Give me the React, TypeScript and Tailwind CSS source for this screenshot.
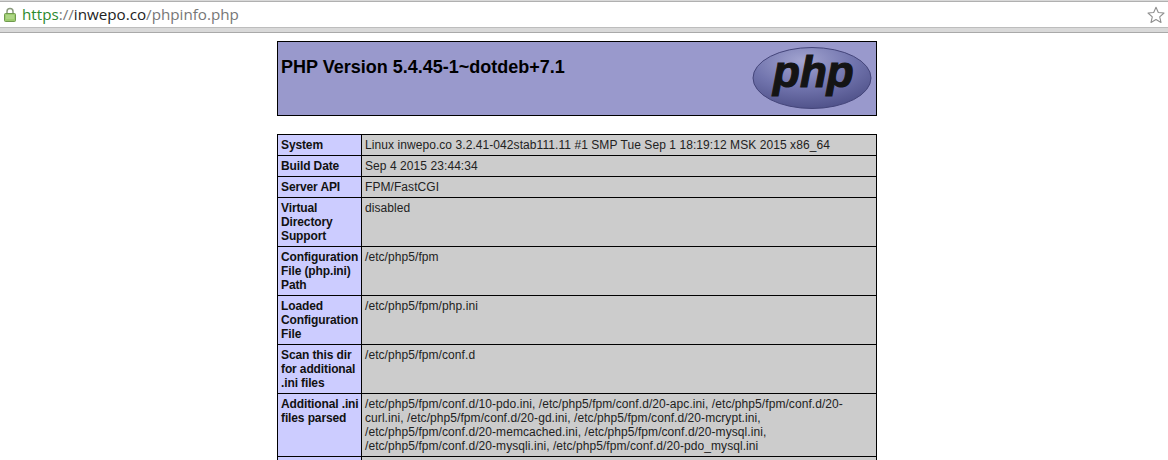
const rows: { label: string; value: string }[] = [
  {
    label: "System",
    value: "Linux inwepo.co 3.2.41-042stab111.11 #1 SMP Tue Sep 1 18:19:12 MSK 2015 x86_64",
  },
  { label: "Build Date", value: "Sep 4 2015 23:44:34" },
  { label: "Server API", value: "FPM/FastCGI" },
  { label: "Virtual Directory Support", value: "disabled" },
  { label: "Configuration File (php.ini) Path", value: "/etc/php5/fpm" },
  { label: "Loaded Configuration File", value: "/etc/php5/fpm/php.ini" },
  { label: "Scan this dir for additional .ini files", value: "/etc/php5/fpm/conf.d" },
  {
    label: "Additional .ini files parsed",
    value:
      "/etc/php5/fpm/conf.d/10-pdo.ini, /etc/php5/fpm/conf.d/20-apc.ini, /etc/php5/fpm/conf.d/20-curl.ini, /etc/php5/fpm/conf.d/20-gd.ini, /etc/php5/fpm/conf.d/20-mcrypt.ini, /etc/php5/fpm/conf.d/20-memcached.ini, /etc/php5/fpm/conf.d/20-mysql.ini, /etc/php5/fpm/conf.d/20-mysqli.ini, /etc/php5/fpm/conf.d/20-pdo_mysql.ini",
  },
  // next row only shows its top border before the window ends
  { label: "\u00a0", value: "\u00a0" },
];

const LockIcon = () => (
  <svg width="12" height="15" viewBox="0 0 12 15" className="shrink-0">
    <path d="M3 7V4.5a3 3 0 0 1 6 0V7" fill="none" stroke="#8a9a7c" strokeWidth="1.5" />
    <rect x="0.5" y="6.5" width="11" height="8" rx="1" fill="#9ccb6e" stroke="#6f9a4d" />
    <path d="M2 9h8M2 11h8" stroke="#bfe09c" strokeWidth="1" />
  </svg>
);

const StarIcon = () => (
  <svg width="18" height="18" viewBox="0 0 18 18">
    <path
      d="M9 1.2l2.3 5.3 5.7.5-4.3 3.8 1.3 5.6L9 13.5l-5 2.9 1.3-5.6L1 7l5.7-.5z"
      fill="#fff"
      stroke="#8f8f8f"
      strokeWidth="1.1"
      strokeLinejoin="round"
    />
  </svg>
);

const PhpLogo = () => (
  <svg width="120" height="64" viewBox="0 0 120 64" className="shrink-0">
    <defs>
      <radialGradient id="oval" cx="42%" cy="22%" r="80%">
        <stop offset="0%" stopColor="#a3a5d1" />
        <stop offset="55%" stopColor="#7174ad" />
        <stop offset="100%" stopColor="#4f5189" />
      </radialGradient>
    </defs>
    <ellipse cx="60" cy="31" rx="59" ry="30.5" fill="url(#oval)" stroke="#44457a" strokeWidth="1" />
    <text
      x="21"
      y="40"
      fontFamily="'Liberation Sans', sans-serif"
      fontSize="44"
      fontWeight="700"
      fontStyle="italic"
      fill="#141414"
      stroke="#141414"
      strokeWidth="1.2"
    >
      php
    </text>
  </svg>
);

export default function App() {
  return (
    <div className="h-[460px] overflow-hidden bg-white font-['Liberation_Sans',Arial,sans-serif] text-black">
      <div className="flex h-[33px] flex-col bg-[#d9d9d9]">
        <div className="mt-px flex h-[27px] items-center border-t border-b border-t-[#b0b0b0] border-b-[#bdbdbd] bg-white pl-1 pr-[3px]">
          <LockIcon />
          <span className="ml-[6px] font-['Open_Sans',sans-serif] text-[15.2px] text-[#777]">
            <span className="text-[#2c8a2e]">https</span>
            <span>://</span>
            <span className="text-[#222]">inwepo.co</span>
            /phpinfo.php
          </span>
          <span className="ml-auto">
            <StarIcon />
          </span>
        </div>
        <div className="mt-auto h-px bg-[#a9a9a9]" />
      </div>

      <div className="pr-[14px]">
        <div className="mx-auto mt-2 w-[600px]">
          <div className="flex h-[75px] items-start justify-between border border-black bg-[#9999cc] pl-[3px] pr-[4px]">
            <h1 className="mt-[14px] text-[18px] leading-[22px] font-bold">
              PHP Version 5.4.45-1~dotdeb+7.1
            </h1>
            <div className="mt-[5px]">
              <PhpLogo />
            </div>
          </div>

          <table className="mt-[18px] w-[600px] table-fixed border-collapse text-[12px] leading-[14px]">
            <colgroup>
              <col className="w-[84px]" />
              <col />
            </colgroup>
            <tbody>
              {rows.map((row, i) => (
                <tr key={i}>
                  <td className="border border-black bg-[#ccccff] py-[3px] pr-0 pl-[3px] align-top font-bold tracking-[-0.12px] text-[#111]">
                    {row.label}
                  </td>
                  <td className="border border-black bg-[#cccccc] py-[3px] pr-[3px] pl-[3px] align-top tracking-[0.07px] text-[#222]">
                    {row.value}
                  </td>
                </tr>
              ))}
            </tbody>
          </table>
        </div>
      </div>
    </div>
  );
}
